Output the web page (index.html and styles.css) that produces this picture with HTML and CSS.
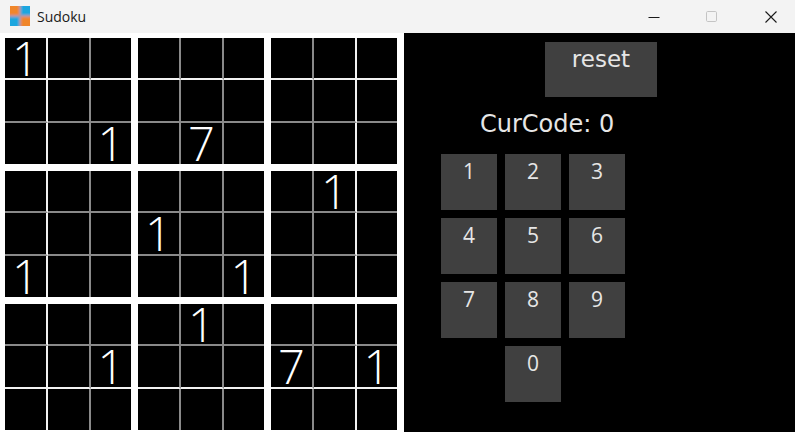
FILE: index.html
```html
<!DOCTYPE html>
<html>
<head>
<meta charset="utf-8">
<title>Sudoku</title>
<link rel="stylesheet" href="styles.css">
</head>
<body>
<div class="window">
  <div class="titlebar">
    <svg class="app-icon" width="20" height="20" viewBox="0 0 20 20">
      <defs>
        <filter id="soft" x="-20%" y="-20%" width="140%" height="140%"><feGaussianBlur stdDeviation="1.6"/></filter>
        <clipPath id="sq"><rect x="0" y="0" width="20" height="20"/></clipPath>
      </defs>
      <g clip-path="url(#sq)">
        <g filter="url(#soft)">
          <rect x="-4" y="-4" width="14" height="14" fill="#f0862a"/>
          <rect x="10" y="-4" width="14" height="14" fill="#1aa6df"/>
          <rect x="-4" y="10" width="14" height="14" fill="#1aa6df"/>
          <rect x="10" y="10" width="14" height="14" fill="#f0862a"/>
        </g>
      </g>
    </svg>
    <span class="title">Sudoku</span>
    <div class="controls">
      <svg class="ctl" width="12" height="12" viewBox="0 0 12 12"><path d="M0.5 6.5H11.5" stroke="#1a1a1a" stroke-width="1"/></svg>
      <svg class="ctl ctl-max" width="12" height="12" viewBox="0 0 12 12"><rect x="0.5" y="0.5" width="10" height="10" rx="1.2" fill="none" stroke="#c4c4c4" stroke-width="1"/></svg>
      <svg class="ctl ctl-close" width="12" height="12" viewBox="0 0 12 12"><path d="M0.5 0.5L11.5 11.5M11.5 0.5L0.5 11.5" stroke="#1a1a1a" stroke-width="1.1"/></svg>
    </div>
  </div>
  <div class="main">
    <div class="board">
      <div class="band">
        <div class="box">
          <div class="cell">1</div><div class="cell"></div><div class="cell"></div>
          <div class="cell"></div><div class="cell"></div><div class="cell"></div>
          <div class="cell"></div><div class="cell"></div><div class="cell">1</div>
        </div>
        <div class="box">
          <div class="cell"></div><div class="cell"></div><div class="cell"></div>
          <div class="cell"></div><div class="cell"></div><div class="cell"></div>
          <div class="cell"></div><div class="cell">7</div><div class="cell"></div>
        </div>
        <div class="box">
          <div class="cell"></div><div class="cell"></div><div class="cell"></div>
          <div class="cell"></div><div class="cell"></div><div class="cell"></div>
          <div class="cell"></div><div class="cell"></div><div class="cell"></div>
        </div>
      </div>
      <div class="band">
        <div class="box">
          <div class="cell"></div><div class="cell"></div><div class="cell"></div>
          <div class="cell"></div><div class="cell"></div><div class="cell"></div>
          <div class="cell">1</div><div class="cell"></div><div class="cell"></div>
        </div>
        <div class="box">
          <div class="cell"></div><div class="cell"></div><div class="cell"></div>
          <div class="cell">1</div><div class="cell"></div><div class="cell"></div>
          <div class="cell"></div><div class="cell"></div><div class="cell">1</div>
        </div>
        <div class="box">
          <div class="cell"></div><div class="cell">1</div><div class="cell"></div>
          <div class="cell"></div><div class="cell"></div><div class="cell"></div>
          <div class="cell"></div><div class="cell"></div><div class="cell"></div>
        </div>
      </div>
      <div class="band">
        <div class="box">
          <div class="cell"></div><div class="cell"></div><div class="cell"></div>
          <div class="cell"></div><div class="cell"></div><div class="cell">1</div>
          <div class="cell"></div><div class="cell"></div><div class="cell"></div>
        </div>
        <div class="box">
          <div class="cell"></div><div class="cell">1</div><div class="cell"></div>
          <div class="cell"></div><div class="cell"></div><div class="cell"></div>
          <div class="cell"></div><div class="cell"></div><div class="cell"></div>
        </div>
        <div class="box">
          <div class="cell"></div><div class="cell"></div><div class="cell"></div>
          <div class="cell">7</div><div class="cell"></div><div class="cell">1</div>
          <div class="cell"></div><div class="cell"></div><div class="cell"></div>
        </div>
      </div>
    </div>
    <div class="panel">
      <div class="reset">reset</div>
      <div class="curcode">CurCode: 0</div>
      <div class="keypad">
        <div class="key">1</div><div class="key">2</div><div class="key">3</div>
        <div class="key">4</div><div class="key">5</div><div class="key">6</div>
        <div class="key">7</div><div class="key">8</div><div class="key">9</div>
        <div class="key key-zero">0</div>
      </div>
    </div>
  </div>
</div>
</body>
</html>
```
FILE: styles.css
```css
html, body {
  margin: 0;
  padding: 0;
}
body {
  width: 795px;
  height: 432px;
  overflow: hidden;
  background: #000;
}
.window {
  width: 795px;
  height: 432px;
  display: flex;
  flex-direction: column;
}
.titlebar {
  height: 33px;
  flex: none;
  background: #f3f3f3;
  display: flex;
  align-items: center;
  font-family: "Open Sans", "Noto Sans", sans-serif;
  font-size: 14px;
  color: #1a1a1a;
}
.app-icon {
  margin-left: 10px;
  margin-top: -1px;
  flex: none;
}
.title {
  margin-left: 7px;
  margin-top: -1px;
}
.controls {
  margin-left: auto;
  padding-right: 18px;
  display: flex;
  align-items: center;
}
.ctl {
  display: block;
  flex: none;
}
.ctl-max {
  margin-left: 46px;
}
.ctl-close {
  margin-left: 47px;
}
.main {
  flex: 1;
  display: flex;
}
.board {
  width: 404px;
  flex: none;
  box-sizing: border-box;
  background: #fff;
  padding: 5px 0 0 5px;
  display: flex;
  flex-direction: column;
  gap: 7px;
}
.band {
  display: flex;
  gap: 7px;
}
.box {
  display: grid;
  grid-template-columns: 43px 43px 40px;
  grid-template-rows: 42px 43px 41px;
  background: #000;
}
.cell {
  box-sizing: border-box;
  border-color: #8a8a8a;
  border-style: solid;
  border-width: 0;
  display: flex;
  align-items: center;
  justify-content: center;
  color: #fff;
  font-family: "Open Sans", "Noto Sans", sans-serif;
  font-weight: 350;
  font-size: 47px;
  line-height: 1;
  overflow: visible;
}
.cell:nth-child(3n+1),
.cell:nth-child(3n+2) {
  border-right-width: 2px;
}
.cell:nth-child(-n+6) {
  border-bottom-width: 2px;
}
.band > .box:first-child .cell:nth-child(3n+1) {
  border-right-color: #f2f2f2;
}
.band > .box:last-child .cell:nth-child(3n+2) {
  border-right-color: #f2f2f2;
}
.band:first-child .cell:nth-child(-n+3) {
  border-bottom-color: #f2f2f2;
}
.band:last-child .cell:nth-child(n+4):nth-child(-n+6) {
  border-bottom-color: #f2f2f2;
}
.panel {
  flex: 1;
  background: #000;
  padding-top: 9px;
  font-family: "DejaVu Sans", "Open Sans", sans-serif;
  color: #e6e6e6;
}
.reset {
  margin-left: 141px;
  width: 112px;
  height: 55px;
  box-sizing: border-box;
  padding-top: 2px;
  background: #404040;
  text-align: center;
  font-size: 23px;
  line-height: 30px;
}
.curcode {
  margin-top: 12px;
  margin-left: 76px;
  font-size: 24px;
  line-height: 30px;
}
.keypad {
  margin-top: 15px;
  margin-left: 37px;
  display: grid;
  grid-template-columns: repeat(3, 56px);
  grid-auto-rows: 56px;
  gap: 8px;
}
.key {
  background: #404040;
  text-align: center;
  font-family: "Open Sans", "Noto Sans", sans-serif;
  font-size: 21px;
  line-height: 24px;
  padding-top: 5px;
  box-sizing: border-box;
}
.key-zero {
  grid-column: 2;
}
```
